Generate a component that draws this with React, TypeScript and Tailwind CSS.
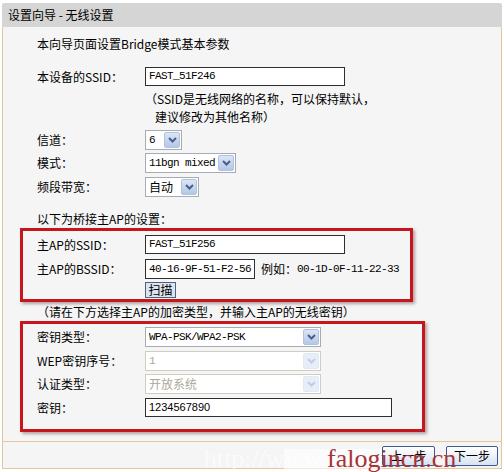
import React from "react";

const mono = "font-['Liberation_Mono',monospace] text-[11px] tracking-[-0.6px]";

function Chevron({ disabled = false }: { disabled?: boolean }) {
  return (
    <svg width="9" height="6" viewBox="0 0 9 6">
      <path
        d="M1 1 L4.5 4.5 L8 1"
        fill="none"
        stroke={disabled ? "#c3cde0" : "#4a5f86"}
        strokeWidth="2"
      />
    </svg>
  );
}

function Select({
  className,
  value,
  disabled = false,
  isMono = false,
}: {
  className: string;
  value: string;
  disabled?: boolean;
  isMono?: boolean;
}) {
  return (
    <div
      className={`flex h-[20px] items-center border bg-white ${
        disabled ? "border-[#cfcdc2] text-[#aca899]" : "border-[#a5acb5] text-black"
      } ${className}`}
    >
      <span className={`flex-1 whitespace-nowrap pl-[3px] ${isMono ? mono : ""}`}>{value}</span>
      <span
        className={`mr-[1px] flex h-[16px] w-[16px] shrink-0 items-center justify-center rounded-[2px] border ${
          disabled
            ? "border-[#e3e9f3] bg-[#e8eef8]"
            : "border-[#b3c2dc] bg-linear-to-b from-[#dbe5f7] to-[#b5c7e7]"
        }`}
      >
        <Chevron disabled={disabled} />
      </span>
    </div>
  );
}

function Input({ className, value, fontClass }: { className: string; value: string; fontClass: string }) {
  return (
    <div className={`flex items-center border border-[#2e2e2e] bg-white pl-[3px] ${fontClass} ${className}`}>
      {value}
    </div>
  );
}

function Row({ label, children, className = "" }: { label: string; children: React.ReactNode; className?: string }) {
  return (
    <div className={`flex items-center ${className}`}>
      <div className="w-[108px] shrink-0">{label}</div>
      {children}
    </div>
  );
}

export default function App() {
  return (
    <div className="relative h-[472px] w-[504px] overflow-hidden bg-white px-[2px] pt-[3px] font-['Noto_Sans_CJK_SC',sans-serif] text-[12px] leading-none text-black">
      {/* title bar */}
      <div className="flex h-[24px] items-center rounded-t-[2px] bg-[#d5d5d5] pl-[6px]">设置向导 - 无线设置</div>

      <div className="flex h-[442px] flex-col border-x border-b border-[#e6c59a] bg-[#f5f5f5]">
        <div className="h-[414px]">
          <div className="ml-[34px] mt-[7px] flex h-[20px] items-center">本向导页面设置Bridge模式基本参数</div>

          <Row label="本设备的SSID：" className="ml-[34px] mt-[13px] h-[19px]">
            <Input className="h-[19px] w-[200px]" value="FAST_51F246" fontClass={mono} />
          </Row>

          <div className="ml-[142px] mt-[4px] flex h-[18px] items-center">（SSID是无线网络的名称，可以保持默认，</div>
          <div className="ml-[152px] flex h-[18px] items-center">建议修改为其他名称）</div>

          <Row label="信道：" className="ml-[34px] mt-[4px] h-[20px]">
            <Select className="w-[37px]" value="6" isMono />
          </Row>
          <Row label="模式：" className="ml-[34px] mt-[3px] h-[20px]">
            <Select className="w-[91px]" value="11bgn mixed" isMono />
          </Row>
          <Row label="频段带宽：" className="ml-[34px] mt-[4px] h-[20px]">
            <Select className="w-[54px]" value="自动" />
          </Row>

          <div className="ml-[34px] mt-[13px] flex h-[18px] items-center">以下为桥接主AP的设置：</div>

          {/* highlighted box 1 */}
          <div className="ml-[17px] w-[393px] border-[3px] border-[#c4161c] pb-[1px] pl-[14px] pt-[4px] shadow-[2px_2px_3px_rgba(60,0,0,0.35)]">
            <Row label="主AP的SSID：" className="h-[19px]">
              <Input className="h-[19px] w-[200px]" value="FAST_51F256" fontClass={mono} />
            </Row>
            <Row label="主AP的BSSID：" className="mt-[5px] h-[20px]">
              <Input className="h-[20px] w-[110px]" value="40-16-9F-51-F2-56" fontClass={mono} />
              <span className="ml-[6px]">例如：</span>
              <span className={mono}>00-1D-0F-11-22-33</span>
            </Row>
            <div className="ml-[108px] mt-[3px] flex h-[16px] w-[31px] items-center justify-center border border-[#51627f] bg-[#dce4ef]">
              扫描
            </div>
          </div>

          <div className="ml-[34px] mt-[1px] flex h-[18px] items-center">（请在下方选择主AP的加密类型，并输入主AP的无线密钥）</div>

          {/* highlighted box 2 */}
          <div className="ml-[17px] w-[405px] border-[3px] border-[#c4161c] pb-[12px] pl-[14px] pt-[3px] shadow-[2px_2px_3px_rgba(60,0,0,0.35)]">
            <Row label="密钥类型：" className="h-[20px]">
              <Select className="w-[176px]" value="WPA-PSK/WPA2-PSK" isMono />
            </Row>
            <Row label="WEP密钥序号：" className="mt-[4px] h-[20px]">
              <Select className="w-[176px]" value="1" isMono disabled />
            </Row>
            <Row label="认证类型：" className="mt-[3px] h-[20px]">
              <Select className="w-[176px]" value="开放系统" disabled />
            </Row>
            <Row label="密钥：" className="mt-[4px] h-[19px]">
              <Input
                className="h-[19px] w-[247px]"
                value="1234567890"
                fontClass="font-['Liberation_Sans',sans-serif] text-[11px]"
              />
            </Row>
          </div>
        </div>

        {/* footer */}
        <div className="flex h-[27px] items-start justify-end gap-[11px] border-t border-[#e6c59a] pr-[3px] pt-[4px]">
          <div className="flex h-[20px] w-[53px] items-center justify-center rounded-[2px] border border-[#3b5a8f] bg-linear-to-b from-white to-[#d8e2f2]">
            上一步
          </div>
          <div className="flex h-[20px] w-[52px] items-center justify-center rounded-[2px] border border-[#3b5a8f] bg-linear-to-b from-white to-[#d8e2f2]">
            下一步
          </div>
        </div>
      </div>

      {/* watermark */}
      <div className="absolute left-[284px] top-[449px] h-[23px] w-[98px] bg-white/60" />
      <div className="absolute right-[177px] top-[444px] font-['Liberation_Serif',serif] text-[26px] leading-[30px] text-white/60">
        http://www.
      </div>
      <div className="absolute left-[327px] top-[444px] font-['Liberation_Serif',serif] text-[26px] leading-[30px] text-[#a8323a]">
        falogincn.cn
      </div>
    </div>
  );
}
